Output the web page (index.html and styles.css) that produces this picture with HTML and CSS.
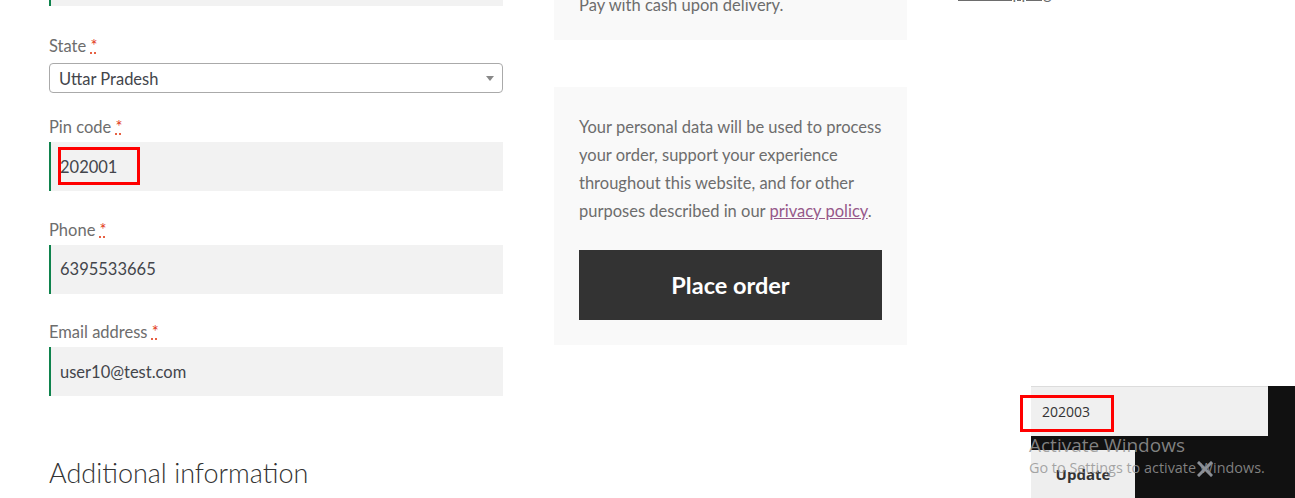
FILE: index.html
```html
<!DOCTYPE html>
<html lang="en">
<head>
<meta charset="utf-8">
<title>Checkout</title>
<link rel="stylesheet" href="styles.css">
</head>
<body>
<div class="page">
  <div class="col-left">
    <div class="field field--first">
      <div class="input input--valid"></div>
    </div>
    <div class="field field--select">
      <label class="label">State <abbr class="req" title="required">*</abbr></label>
      <div class="select">
        <span>Uttar Pradesh</span>
        <span class="caret"></span>
      </div>
    </div>
    <div class="field">
      <label class="label">Pin code <abbr class="req" title="required">*</abbr></label>
      <div class="input input--valid input--marked">
        <span>202001</span>
        <span class="mark mark--pin"></span>
      </div>
    </div>
    <div class="field">
      <label class="label">Phone <abbr class="req" title="required">*</abbr></label>
      <div class="input input--valid"><span>6395533665</span></div>
    </div>
    <div class="field">
      <label class="label">Email address <abbr class="req" title="required">*</abbr></label>
      <div class="input input--valid"><span>user10@test.com</span></div>
    </div>
    <h3 class="heading">Additional information</h3>
  </div>

  <div class="col-mid">
    <div class="panel panel--pay">
      <p class="panel-text">Pay with cash upon delivery.</p>
    </div>
    <div class="panel panel--order">
      <p class="panel-text">Your personal data will be used to process your order, support your experience throughout this website, and for other purposes described in our <a class="privacy" href="#">privacy policy</a>.</p>
      <button class="place-order" type="button">Place order</button>
    </div>
  </div>

  <div class="col-right">
    <a class="side-link" href="#">Free shipping</a>
  </div>
</div>

<div class="widget">
  <div class="widget-input"><span>202003</span></div>
  <button class="widget-update" type="button">Update</button>
</div>
<span class="mark mark--widget"></span>

<div class="watermark">
  <div class="wm-title">Activate Windows</div>
  <div class="wm-sub">Go to Settings to activate Windows.</div>
  <svg class="wm-x" width="16" height="16" viewBox="0 0 16 16" aria-hidden="true">
    <path d="M2 2 L14 14 M14 2 L2 14" stroke="#8a8f96" stroke-width="3" stroke-linecap="square"/>
  </svg>
</div>
</body>
</html>
```
FILE: styles.css
```css
html, body {
  margin: 0;
  padding: 0;
  background: #ffffff;
  overflow: hidden;
}
body {
  font-family: "Lato", "Liberation Sans", sans-serif;
  font-size: 16.5px;
  color: #6d6d6d;
  position: relative;
  width: 1295px;
  height: 498px;
}
.page {
  display: flex;
  align-items: flex-start;
  padding-left: 49px;
}
.col-left {
  width: 454px;
  flex: none;
  margin-top: -43px;
}
.field {
  margin-bottom: 26.5px;
}
.field--first {
  margin-bottom: 28px;
}
.field--select {
  margin-bottom: 22px;
}
.label {
  display: block;
  line-height: 24px;
  margin-bottom: 3px;
  color: #6d6d6d;
}
.field--select .label {
  margin-bottom: 5px;
}
.req {
  color: #e2401c;
  text-decoration: underline dotted;
  border: none;
  cursor: help;
}
.input {
  position: relative;
  box-sizing: border-box;
  height: 49px;
  background: #f2f2f2;
  display: flex;
  align-items: center;
  padding-left: 9px;
  color: #43454b;
}
.input--valid {
  border-left: 2px solid #0f834d;
}
.select {
  box-sizing: border-box;
  height: 30px;
  border: 1px solid #aaaaaa;
  border-radius: 4px;
  display: flex;
  align-items: center;
  justify-content: space-between;
  padding: 2px 8px 0 9px;
  color: #43454b;
  background: #fff;
}
.caret {
  width: 0;
  height: 0;
  margin-bottom: 2px;
  border-left: 4px solid transparent;
  border-right: 4px solid transparent;
  border-top: 5px solid #888888;
}
.mark {
  position: absolute;
  box-sizing: border-box;
  border: 3px solid #ff0000;
}
.mark--pin {
  left: 7px;
  top: 5px;
  width: 82px;
  height: 38px;
}
.heading {
  margin: 59px 0 0;
  font-size: 27px;
  font-weight: 300;
  line-height: 36px;
  color: #333333;
}
.col-mid {
  width: 353px;
  flex: none;
  margin-left: 51px;
}
.panel {
  background: #f9f9f9;
  box-sizing: border-box;
}
.panel-text {
  margin: 0;
  line-height: 28px;
  color: #6d6d6d;
}
.panel--pay {
  margin-top: -9px;
  padding: 0 25px 21px;
}
.panel--order {
  margin-top: 47px;
  padding: 26px 25px 25px;
}
.panel--order .panel-text {
  margin-bottom: 25px;
}
.privacy {
  color: #96588a;
  text-decoration: underline;
}
.place-order {
  display: block;
  width: 100%;
  height: 70px;
  border: none;
  background: #333333;
  color: #ffffff;
  font-family: "Lato", "Liberation Sans", sans-serif;
  font-size: 23.5px;
  font-weight: 700;
  cursor: pointer;
}
.col-right {
  margin-left: 51px;
  margin-top: -19px;
  line-height: 24px;
  font-size: 16px;
}
.side-link {
  color: #6d6d6d;
  text-decoration: underline;
}
.widget {
  position: absolute;
  left: 1031px;
  top: 386px;
  width: 264px;
  height: 112px;
  background: #111111;
  display: flex;
  flex-direction: column;
  align-items: flex-start;
}
.widget-input {
  box-sizing: border-box;
  width: 237px;
  height: 50px;
  background: #f0f0f0;
  border-top: 1px solid #dcdcdc;
  display: flex;
  align-items: center;
  padding-left: 11px;
  font-family: "Open Sans", "DejaVu Sans", sans-serif;
  font-size: 14px;
  color: #333333;
}
.widget-update {
  margin-top: 14px;
  width: 104px;
  height: 48px;
  border: none;
  background: #eeeeee;
  font-family: "Open Sans", "DejaVu Sans", sans-serif;
  font-size: 15px;
  font-weight: 700;
  color: #333333;
  padding: 0;
}
.mark--widget {
  left: 1020px;
  top: 395px;
  width: 94px;
  height: 37px;
}
.watermark {
  position: absolute;
  left: 1029px;
  top: 432px;
  width: 266px;
  pointer-events: none;
  font-family: "Open Sans", "DejaVu Sans", sans-serif;
  color: rgba(150, 150, 150, 0.85);
}
.wm-title {
  font-size: 19px;
  line-height: 26px;
}
.wm-sub {
  font-size: 14.4px;
  line-height: 20px;
}
.wm-x {
  position: absolute;
  left: 168px;
  top: 29px;
}
```
